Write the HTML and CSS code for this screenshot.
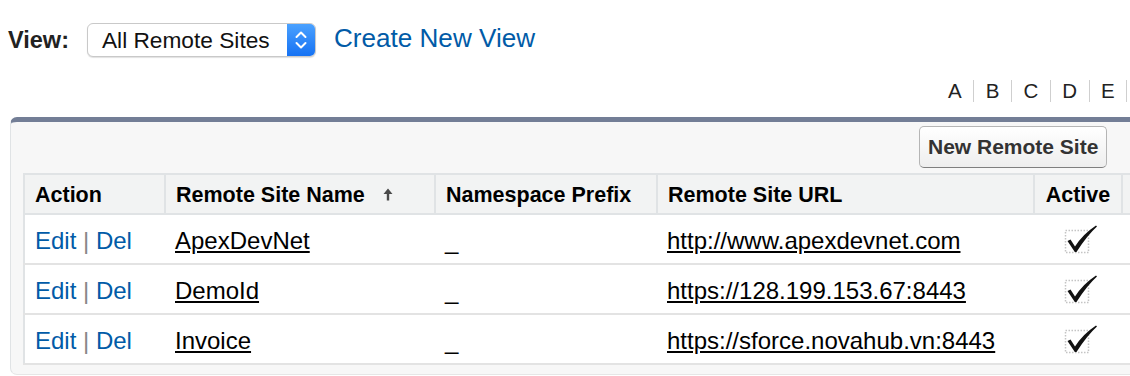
FILE: index.html
```html
<!DOCTYPE html>
<html lang="en">
<head>
    <meta charset="UTF-8">
    <title>Remote Site Settings</title>
    <link rel="stylesheet" href="styles.css">
</head>
<body>

    <div class="viewBar">
        <label class="viewLabel" for="fcf">View:</label>
        <div class="viewSelect" id="fcf">
            <span class="viewSelectText">All Remote Sites</span>
            <span class="viewSelectArrows">
                <svg width="14" height="22" viewBox="0 0 14 22">
                    <path d="M2.5 8 L7 3.5 L11.5 8" fill="none" stroke="#fff" stroke-width="2" stroke-linecap="round" stroke-linejoin="round"/>
                    <path d="M2.5 14 L7 18.5 L11.5 14" fill="none" stroke="#fff" stroke-width="2" stroke-linecap="round" stroke-linejoin="round"/>
                </svg>
            </span>
        </div>
        <a class="createLink" href="#">Create New View</a>
    </div>

    <div class="rolodex">
        <a href="#">A</a><span class="sep"></span>
        <a href="#">B</a><span class="sep"></span>
        <a href="#">C</a><span class="sep"></span>
        <a href="#">D</a><span class="sep"></span>
        <a href="#">E</a><span class="sep"></span>
    </div>

    <div class="listPanel">
        <div class="pbHeader">
            <div class="pbTitle"></div>
            <button class="btn">New Remote Site</button>
        </div>

        <table class="list">
            <thead>
                <tr class="headerRow">
                    <th class="colAction">Action</th>
                    <th class="colName">Remote Site Name
                        <svg class="sortArrow" width="10" height="13" viewBox="0 0 10 13">
                            <path d="M5 0.5 L9.5 6 L6.2 6 L6.2 12.5 L3.8 12.5 L3.8 6 L0.5 6 Z" fill="#4a4a4a"/>
                        </svg>
                    </th>
                    <th class="colPrefix">Namespace Prefix</th>
                    <th class="colUrl">Remote Site URL</th>
                    <th class="colActive">Active</th>
                    <th class="colRest"></th>
                </tr>
            </thead>
            <tbody>
                <tr class="dataRow">
                    <td class="actionCell"><a href="#">Edit</a> <span class="pipe">|</span> <a href="#">Del</a></td>
                    <td><a class="rowLink" href="#">ApexDevNet</a></td>
                    <td>_</td>
                    <td><a class="rowLink" href="#">http://www.apexdevnet.com</a></td>
                    <td class="activeCell">
                        <svg class="checkImg" width="36" height="30" viewBox="0 0 36 30">
                            <rect x="2.5" y="6.5" width="23" height="22" fill="none" stroke="#c4c4c4" stroke-width="1.5" stroke-dasharray="1.5 1.5"/>
                            <path d="M4.5 17 L7.5 15.5 L12 22.5 Q20 10 33 1.5 L34 2.5 Q24 11.5 13.5 28 L11.8 28 Z" fill="#111"/>
                        </svg>
                    </td>
                    <td></td>
                </tr>
                <tr class="dataRow">
                    <td class="actionCell"><a href="#">Edit</a> <span class="pipe">|</span> <a href="#">Del</a></td>
                    <td><a class="rowLink" href="#">DemoId</a></td>
                    <td>_</td>
                    <td><a class="rowLink" href="#">https://128.199.153.67:8443</a></td>
                    <td class="activeCell">
                        <svg class="checkImg" width="36" height="30" viewBox="0 0 36 30">
                            <rect x="2.5" y="6.5" width="23" height="22" fill="none" stroke="#c4c4c4" stroke-width="1.5" stroke-dasharray="1.5 1.5"/>
                            <path d="M4.5 17 L7.5 15.5 L12 22.5 Q20 10 33 1.5 L34 2.5 Q24 11.5 13.5 28 L11.8 28 Z" fill="#111"/>
                        </svg>
                    </td>
                    <td></td>
                </tr>
                <tr class="dataRow">
                    <td class="actionCell"><a href="#">Edit</a> <span class="pipe">|</span> <a href="#">Del</a></td>
                    <td><a class="rowLink" href="#">Invoice</a></td>
                    <td>_</td>
                    <td><a class="rowLink" href="#">https://sforce.novahub.vn:8443</a></td>
                    <td class="activeCell">
                        <svg class="checkImg" width="36" height="30" viewBox="0 0 36 30">
                            <rect x="2.5" y="6.5" width="23" height="22" fill="none" stroke="#c4c4c4" stroke-width="1.5" stroke-dasharray="1.5 1.5"/>
                            <path d="M4.5 17 L7.5 15.5 L12 22.5 Q20 10 33 1.5 L34 2.5 Q24 11.5 13.5 28 L11.8 28 Z" fill="#111"/>
                        </svg>
                    </td>
                    <td></td>
                </tr>
            </tbody>
        </table>
    </div>

</body>
</html>
```

FILE: styles.css
```css
html, body {
    overflow: hidden;
}
body {
    margin: 0;
    width: 1400px;
    font-family: 'Liberation Sans', Arial, sans-serif;
    font-size: 21.5px;
    color: #000;
    background: #fff;
}
a {
    color: #015ba7;
    text-decoration: none;
}
.viewBar {
    display: flex;
    align-items: center;
    padding: 23px 0 0 8px;
    height: 34px;
}
.viewLabel {
    font-weight: bold;
    font-size: 23.5px;
    color: #222;
    margin-right: 18px;
}
.viewSelect {
    display: flex;
    align-items: center;
    width: 229px;
    height: 34px;
    box-sizing: border-box;
    border: 1px solid #c9c9c9;
    border-radius: 6px;
    box-shadow: 0 1px 1px rgba(0, 0, 0, 0.12);
    overflow: hidden;
    background: #fff;
}
.viewSelectText {
    flex: 1;
    padding-left: 14px;
    font-size: 22.7px;
    color: #111;
    white-space: nowrap;
}
.viewSelectArrows {
    display: flex;
    align-items: center;
    justify-content: center;
    width: 28px;
    height: 100%;
    background: linear-gradient(#4aa1ff, #1672f3);
}
.createLink {
    font-size: 26.1px;
    margin-left: 18px;
    margin-top: -4px;
}
.rolodex {
    display: flex;
    align-items: center;
    padding-left: 948px;
    margin-top: 22px;
    height: 24px;
    white-space: nowrap;
}
.rolodex a {
    color: #222;
    font-size: 20.5px;
}
.rolodex .sep {
    display: inline-block;
    width: 1px;
    height: 22px;
    background: #cfcfcf;
    margin: 0 11.5px;
}
.listPanel {
    margin: 14px 0 0 10px;
    border-top: 5px solid #737e96;
    border-left: 1px solid #e0e3e5;
    border-bottom: 1px solid #e6e6e6;
    border-radius: 7px 0 0 7px;
    background: #f7f7f7;
    padding: 4px 0 9px 12px;
}
.pbHeader {
    display: flex;
    align-items: center;
}
.pbTitle {
    width: 896px;
}
.btn {
    font-family: 'Liberation Sans', Arial, sans-serif;
    font-weight: bold;
    font-size: 21px;
    color: #333;
    height: 42px;
    padding: 0 8px;
    border: 1px solid #b5b5b5;
    border-bottom-color: #7f7f7f;
    border-radius: 5px;
    background: linear-gradient(#ffffff, #eeeeee);
}
.list {
    margin-top: 5px;
    border-collapse: collapse;
    width: 1300px;
    background: #fff;
    border-left: 2px solid #e0e3e5;
}
.headerRow th {
    height: 40px;
    box-sizing: border-box;
    text-align: left;
    font-weight: bold;
    font-size: 21.5px;
    background: #f2f3f3;
    border-top: 2px solid #e0e3e5;
    border-bottom: 2px solid #e0e3e5;
    border-right: 2px solid #e0e3e5;
    padding: 2px 10px 0;
    white-space: nowrap;
}
.colAction { width: 141px; }
.colName { width: 270px; }
.colPrefix { width: 222px; }
.colUrl { width: 377px; }
.colActive { width: 88px; }
.headerRow th.colActive {
    text-align: center;
}
.sortArrow {
    margin-left: 12px;
    vertical-align: 1px;
}
.dataRow td {
    height: 50px;
    box-sizing: border-box;
    padding: 3px 10px 0;
    font-size: 24px;
    border-bottom: 2px solid #e3e3e3;
    white-space: nowrap;
}
.actionCell a {
    color: #015ba7;
}
.pipe {
    color: #888;
}
.rowLink {
    color: #000;
    text-decoration: underline;
}
.dataRow td.activeCell {
    text-align: center;
    padding-top: 0;
}
.checkImg {
    display: inline-block;
    vertical-align: middle;
    margin-left: 6px;
}
```
